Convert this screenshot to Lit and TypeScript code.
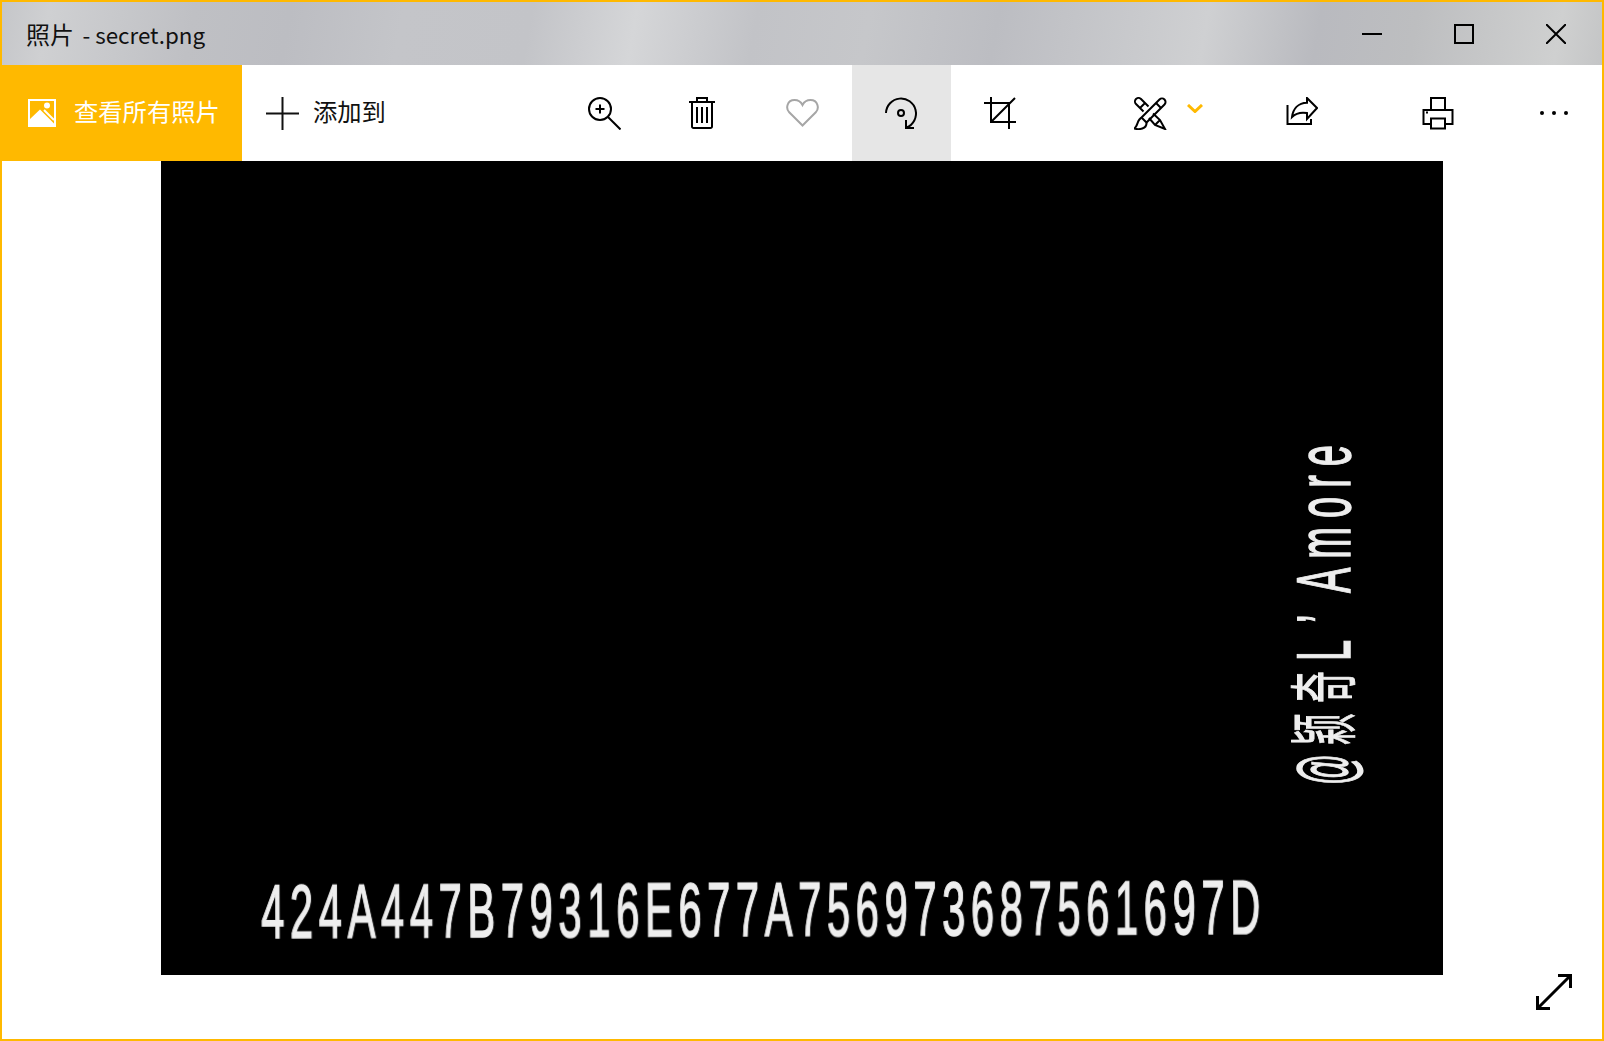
import { html, css, LitElement, svg } from 'lit';
import { customElement } from 'lit/decorators.js';

const icon = (w: number, h: number, body: unknown, strokeWidth = 2) => html`
  <svg width=${w} height=${h} viewBox="0 0 ${w} ${h}" fill="none" stroke="currentColor" stroke-width=${strokeWidth}>${body}</svg>
`;

const ICONS = {
  photo: html`<svg width="28" height="28" viewBox="0 0 28 28">
    <path fill="#fff" fill-rule="evenodd" d="M0 0h28v28H0zM2 2v18L12 10.500 26 24.500V2z" />
    <circle cx="19" cy="6.500" r="3" fill="#fff" />
    <path stroke="#fff" stroke-width="2" d="M16 11l10 10" fill="none" />
  </svg>`,
  plus: icon(33, 33, svg`<path d="M16.500 0v33M0 16.500h33" />`),
  zoom: icon(33, 33, svg`
    <circle cx="12" cy="12" r="11" />
    <path d="M12 7.500v9M7.500 12h9" />
    <path d="M20 20L32.500 32.500" />`),
  trash: icon(26, 32, svg`
    <path d="M0 5h26M8 4.500V1h10v3.500" />
    <path d="M3 5v24.500a1.500 1.500 0 0 0 1.500 1.500h17a1.500 1.500 0 0 0 1.500-1.500V5" />
    <path d="M8 10v16M13 10v16M18 10v16" />`),
  heart: html`<svg width="33" height="28" viewBox="0 0 33 28" fill="none" stroke="#a6a6a6" stroke-width="2">
    <path d="M16.500 26.500L3.200 13.200C-.5 9.500 1 1 8.500 1 12 1 15 3 16.500 6 18 3 21 1 24.500 1 32 1 33.500 9.500 29.800 13.200z" />
  </svg>`,
  rotate: icon(33, 33, svg`
    <path d="M1 16A15 15 0 1 1 21.500 30.500" />
    <circle cx="16" cy="16" r="3" />
    <path d="M21 23v8h8" />`),
  crop: icon(33, 33, svg`
    <path d="M0 6h25v26M7 0v25h25M7 25L31 1" />`),
  paint: icon(33, 33, svg`
    <path d="M25.500 2.500a3.500 3.500 0 0 1 5 5l-18 18-5-5z" />
    <path d="M7.500 21C3 22 4 30 0 31.500 5 33 13 32 12.500 25.500" />
    <path d="M22 6l5 5" />
    <path d="M14.500 9.500L7 2a3.500 3.500 0 0 0-5 5l7.500 7.500M6 11l5-5" />
    <path d="M19 16.500L26 23l5 9-10-4-6-7M21 28l5-5" />`),
  chevron: html`<svg width="16" height="9" viewBox="0 0 16 9" fill="none" stroke="#ffb900" stroke-width="3">
    <path d="M1 1l7 6.500L15 1" />
  </svg>`,
  share: icon(32, 28, svg`
    <path d="M1.500 8v19H25v-5" />
    <path d="M21 1l10 10-10 11v-6C15 15 10 16 6 20 7 12 12 6 21 5.700z" />`),
  print: icon(33, 33, svg`
    <path d="M9 13V1h14v12" />
    <path d="M8 27H1.500V13h29v14H24" />
    <path d="M9 21.500h14v10H9z" />
    <path d="M4 15.500h2" />`),
  more: html`<svg width="28" height="4" viewBox="0 0 28 4" fill="#000">
    <circle cx="2" cy="2" r="2" /><circle cx="14" cy="2" r="2" /><circle cx="26" cy="2" r="2" />
  </svg>`,
  expand: icon(36, 36, svg`
    <path d="M2 34L34 2" />
    <path d="M22 1.500h12.500V14M1.500 22v12.500H14" />`, 3),
};

@customElement('app-root')
export class AppRoot extends LitElement {
  static styles = css`
    :host {
      display: block;
      width: 1604px;
      height: 1041px;
      font-family: 'Noto Sans CJK SC', 'Noto Sans', sans-serif;
    }

    .window {
      box-sizing: border-box;
      display: flex;
      flex-direction: column;
      height: 100%;
      border: 2px solid #ffb900;
      background: #fff;
    }

    .titlebar {
      display: flex;
      align-items: center;
      height: 63px;
      padding-left: 24px;
      font-size: 24px;
      color: #111;
      background: linear-gradient(100deg,
        #c5c6c9 0%, #cfd0d2 3%, #bfc0c4 12%, #bcbdc2 18%, #c4c5c9 25%, #c3c4c8 33%,
        #d5d6d8 39.500%, #c2c3c7 47%, #c6c7ca 54%, #bcbdc2 62%, #cfd0d2 75%, #b9babf 82%,
        #bdbec0 88%, #cfd0d0 97%, #c4c5c6 100%);
    }

    .title {
      flex: 1;
    }

    .title .latin {
      margin-left: 3px;
      font-size: 22.400px;
    }

    .window-button {
      display: flex;
      align-items: center;
      justify-content: center;
      width: 92px;
      height: 100%;
      color: #000;
    }

    .toolbar {
      display: flex;
      align-items: center;
      height: 96px;
      color: #000;
    }

    .home {
      display: flex;
      align-items: center;
      gap: 18px;
      box-sizing: border-box;
      width: 240px;
      height: 100%;
      padding-left: 26px;
      font-size: 24.300px;
      color: #fff;
      background: #ffb900;
    }

    .add {
      display: flex;
      align-items: center;
      gap: 14px;
      width: 313px;
      padding-left: 24px;
      box-sizing: border-box;
      font-size: 24.300px;
      color: #111;
    }

    .home span,
    .add span {
      padding-bottom: 5px;
    }

    .tool {
      display: flex;
      align-items: center;
      justify-content: center;
      flex: none;
      width: 99px;
      height: 100%;
    }

    .tool.active {
      background: #e6e6e6;
    }

    .tool.trash svg {
      margin-right: 3px;
    }

    .tool.edit {
      box-sizing: border-box;
      justify-content: flex-start;
      width: 202px;
      gap: 20px;
      padding-left: 84px;
    }

    .tool.edit svg:last-child {
      margin-top: -10px;
    }

    .tool.share svg {
      margin-top: -4px;
    }

    .tool.print {
      width: 174px;
    }

    .tool.more {
      width: 58px;
    }

    .stage {
      position: relative;
      flex: 1;
      display: flex;
      justify-content: center;
      align-items: flex-start;
    }

    .photo {
      position: relative;
      width: 1282px;
      height: 814px;
      margin-left: -1px;
      overflow: hidden;
      background: #000;
      color: #eee;
      font-family: 'Liberation Sans', Arial, sans-serif;
    }

    .flag,
    .credit {
      position: absolute;
      white-space: nowrap;
      filter: blur(0.6px);
      transform-origin: 0 0;
      font-size: 76px;
      line-height: 76px;
      -webkit-text-stroke: 1.500px #eee;
    }

    .flag {
      left: 100px;
      top: 713px;
      letter-spacing: 10.100px;
      transform: rotate(-0.25deg) scaleX(0.55);
    }

    .credit {
      left: 1122px;
      top: 624px;
      display: flex;
      align-items: baseline;
      transform: rotate(-90deg);
    }

    .credit span {
      display: inline-block;
      transform-origin: 0 50%;
    }

    .credit .at {
      width: 40px;
      transform: translateY(2px) scaleX(0.4);
    }

    .credit .cjk {
      width: 42px;
      font-family: 'Noto Sans CJK SC', sans-serif;
      font-size: 68px;
      -webkit-text-stroke: 1px #eee;
      transform: translateY(-1px) scaleX(0.47);
    }

    .credit .letter {
      width: 38px;
      transform: scaleX(0.5);
    }

    .credit .mark {
      width: 30px;
      transform: scaleX(0.5);
    }

    .credit .word {
      letter-spacing: 18px;
      transform: scaleX(0.5);
    }

    .expand {
      position: absolute;
      right: 30px;
      bottom: 29px;
      display: flex;
    }
  `;

  render() {
    return html`
      <div class="window">
        <div class="titlebar">
          <span class="title">照片 <span class="latin">- secret.png</span></span>
          <span class="window-button">${icon(20, 2, svg`<path d="M0 1h20" />`)}</span>
          <span class="window-button">${icon(20, 20, svg`<path d="M1 1h18v18H1z" />`)}</span>
          <span class="window-button">${icon(20, 20, svg`<path d="M0 0l20 20M20 0L0 20" />`)}</span>
        </div>
        <div class="toolbar">
          <div class="home">${ICONS.photo}<span>查看所有照片</span></div>
          <div class="add">${ICONS.plus}<span>添加到</span></div>
          <div class="tool">${ICONS.zoom}</div>
          <div class="tool trash">${ICONS.trash}</div>
          <div class="tool">${ICONS.heart}</div>
          <div class="tool active">${ICONS.rotate}</div>
          <div class="tool">${ICONS.crop}</div>
          <div class="tool edit">${ICONS.paint}${ICONS.chevron}</div>
          <div class="tool share">${ICONS.share}</div>
          <div class="tool print">${ICONS.print}</div>
          <div class="tool more">${ICONS.more}</div>
        </div>
        <div class="stage">
          <div class="photo">
            <div class="flag">424A447B79316E677A756973687561697D</div>
            <div class="credit">
              <span class="at">@</span><span class="cjk">颖</span><span class="cjk">奇</span><span class="letter">L</span><span class="mark">’</span><span class="word">Amore</span>
            </div>
          </div>
          <div class="expand">${ICONS.expand}</div>
        </div>
      </div>
    `;
  }
}

declare global {
  interface HTMLElementTagNameMap {
    'app-root': AppRoot;
  }
}
